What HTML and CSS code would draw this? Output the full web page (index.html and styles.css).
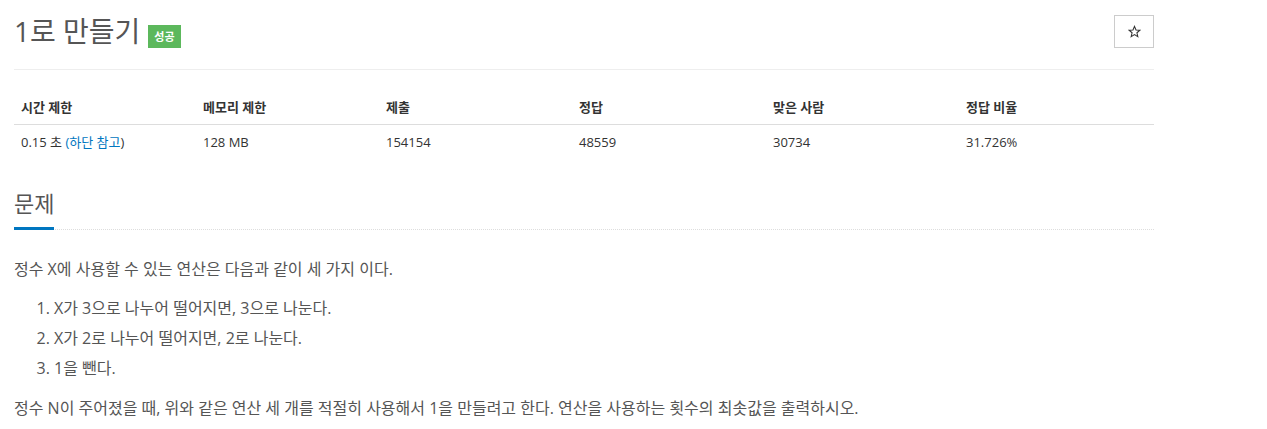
FILE: index.html
```html
<!DOCTYPE html>
<html lang="ko">
<head>
<meta charset="utf-8">
<link rel="stylesheet" href="styles.css">
</head>
<body>
<div class="container">
  <div class="page-header">
    <h1 class="title"><span class="title-text">1로 만들기</span><span class="badge">성공</span></h1>
    <button class="star-btn" type="button"><svg class="star" viewBox="0 0 24 24" width="13" height="13"><path d="M12 2.5l2.8 6.6 7.1.6-5.4 4.7 1.6 7-6.1-3.7-6.1 3.7 1.6-7-5.4-4.7 7.1-.6z" fill="none" stroke="#333" stroke-width="2" stroke-linejoin="miter"/></svg></button>
  </div>
  <table class="info">
    <thead>
      <tr><th class="c1">시간 제한</th><th class="c2">메모리 제한</th><th class="c3">제출</th><th class="c4">정답</th><th class="c5">맞은 사람</th><th class="c6">정답 비율</th></tr>
    </thead>
    <tbody>
      <tr><td>0.15 초 <a class="link">(하단 참고</a>)</td><td>128 MB</td><td>154154</td><td>48559</td><td>30734</td><td>31.726%</td></tr>
    </tbody>
  </table>
  <section class="problem">
    <div class="headline"><h2 class="headline-text">문제</h2></div>
    <div class="desc">
      <p>정수 X에 사용할 수 있는 연산은 다음과 같이 세 가지 이다.</p>
      <ol>
        <li>X가 3으로 나누어 떨어지면, 3으로 나눈다.</li>
        <li>X가 2로 나누어 떨어지면, 2로 나눈다.</li>
        <li>1을 뺀다.</li>
      </ol>
      <p>정수 N이 주어졌을 때, 위와 같은 연산 세 개를 적절히 사용해서 1을 만들려고 한다. 연산을 사용하는 횟수의 최솟값을 출력하시오.</p>
    </div>
  </section>
</div>
</body>
</html>
```
FILE: styles.css
```css
* { box-sizing: border-box; }
body {
  margin: 0;
  font-family: "Open Sans", "Noto Sans CJK KR", sans-serif;
  color: #333;
  background: #fff;
}
.container {
  width: 1140px;
  margin-left: 14px;
}
.page-header {
  display: flex;
  justify-content: space-between;
  align-items: flex-start;
  padding-top: 15px;
  padding-bottom: 9px;
  border-bottom: 1px solid #eee;
  height: 70px;
}
.title {
  margin: 0;
  font-size: 28px;
  font-weight: 400;
  line-height: 36px;
  color: #555;
  display: flex;
  align-items: center;
}
.title-text { margin-top: -2px; }
.badge {
  display: inline-block;
  background: #5cb85c;
  color: #fff;
  font-size: 11px;
  font-weight: 700;
  line-height: 23px;
  height: 23px;
  padding: 0 6px;
  margin-left: 8px;
  margin-top: 8px;
}
.star-btn {
  width: 40px;
  height: 33px;
  border: 1px solid #ccc;
  background: #fff;
  padding: 0;
  display: flex;
  align-items: center;
  justify-content: center;
}
.star { display: block; }
.info {
  border-collapse: collapse;
  width: 1140px;
  margin-top: 21px;
  font-size: 13px;
}
.info th, .info td {
  text-align: left;
  padding: 7px 7px;
  line-height: 18px;
}
.info th { font-weight: 700; border-bottom: 1px solid #ddd; padding-bottom: 8px; }
.info td { padding-top: 8px; }
.info .c1 { width: 182px; }
.info .c2 { width: 183px; }
.info .c3 { width: 193px; }
.info .c4 { width: 194px; }
.info .c5 { width: 193px; }
.link { color: #0076c0; }
.problem { margin-top: 26px; }
.headline {
  border-bottom: 1px dotted #ddd;
  height: 46px;
}
.headline-text {
  margin: 0;
  display: inline-block;
  font-size: 22px;
  font-weight: 400;
  color: #555;
  line-height: 38px;
  height: 46px;
  border-bottom: 3px solid #0076c0;
}
.desc {
  font-size: 16px;
  line-height: 30px;
  color: #555;
  padding-top: 24px;
}
.desc p { margin: 0 0 9px; }
.desc ol { margin: 0 0 10px; padding-left: 40px; }
```
